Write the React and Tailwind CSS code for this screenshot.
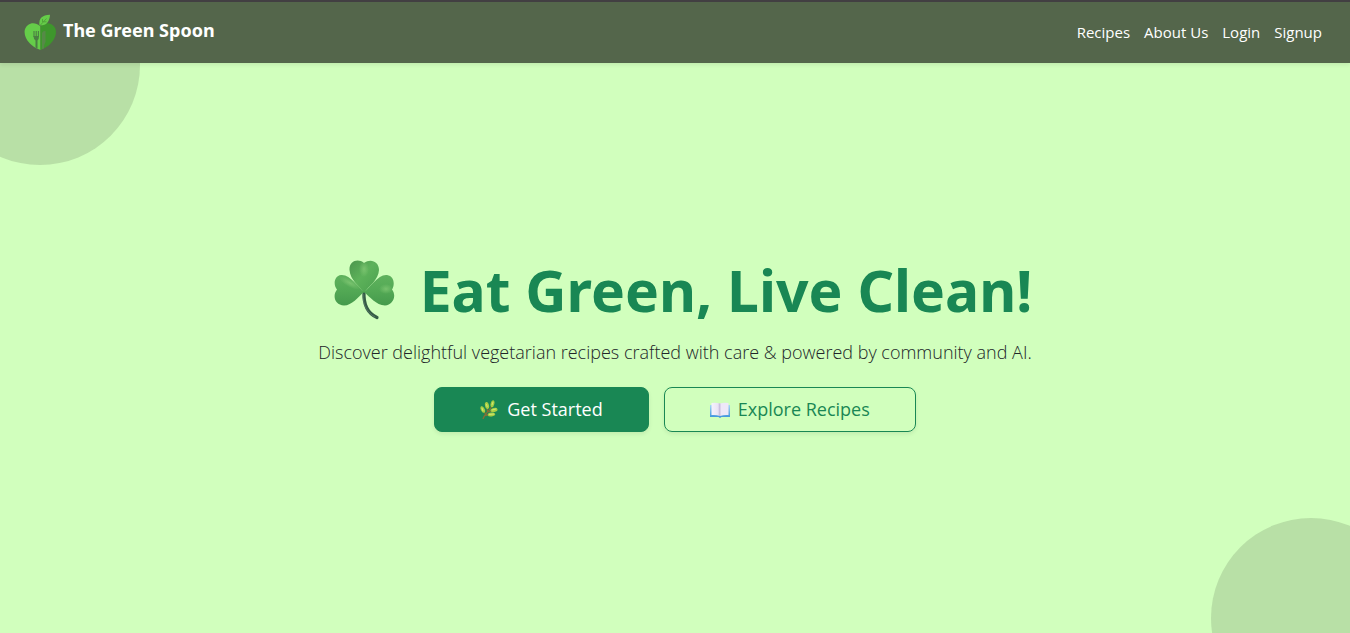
const navLinks = ['Recipes', 'About Us', 'Login', 'Signup'];

function LogoMark() {
  return (
    <svg viewBox="0 0 34 38" className="h-[38px] w-[34px] shrink-0" aria-hidden="true">
      <path d="M16.500 12.500C12 8.500 7.500 8.500 4 11C0 14 -.3 19 2 24C5 30 10 33.500 16.500 36Z" fill="#65cd49" />
      <path d="M16.500 12.500C21 8.500 25 8.500 28.500 11C32.500 14 33 19 30.500 24C28 29.500 23 33.500 16.500 36Z" fill="#3e962c" />
      <path d="M15.500 11.500C14.500 4.500 18 1 26 .8C25.500 8 22 12 15.500 11.500Z" fill="#65cd49" />
      <path d="M16 11.500L22.500 4.500M18.500 8V5M19.500 7.800H22.500" stroke="#438b31" strokeWidth=".6" fill="none" />
      <path d="M10 17V23M12.200 17V23M14.400 17V23" stroke="#4a7f42" strokeWidth="1.100" fill="none" />
      <path d="M9.500 22H15Q15 25.500 13.500 26.500V34.500L11.500 33.500V26.500Q9.500 25 9.500 22Z" fill="#4a7f42" />
      <path d="M18 35V19Q19 16.500 21.500 17V28Q20 30 20 34.500Z" fill="#568a47" />
    </svg>
  );
}

function Shamrock() {
  return (
    <svg viewBox="0 0 62 60" className="h-[60px] w-[62px] shrink-0" aria-hidden="true">
      <defs>
        <linearGradient id="leafTop" x1="0" y1="0" x2="1" y2="1">
          <stop stopColor="#4b954d" />
          <stop offset=".45" stopColor="#5db25a" />
          <stop offset="1" stopColor="#4a9f4e" />
        </linearGradient>
        <linearGradient id="leafSide" x1="0" y1="0" x2="0" y2="1">
          <stop stopColor="#5fb25d" />
          <stop offset=".5" stopColor="#53a955" />
          <stop offset="1" stopColor="#459a4c" />
        </linearGradient>
        <radialGradient id="leafShine">
          <stop stopColor="#8fd17d" stopOpacity=".6" />
          <stop offset="1" stopColor="#8fd17d" stopOpacity="0" />
        </radialGradient>
      </defs>
      <path d="M30 32C29.500 43 33 53 43 57.500" stroke="#355c45" strokeWidth="3.200" strokeLinecap="round" fill="none" />
      <path d="M29 34C28.500 44 33 53 41 57" stroke="#628374" strokeWidth=".7" fill="none" />
      <path d="M30 33C26 27 16 20 15.500 10C15 1 24-2 30 3C37-2 45 2 45 10C44.500 20 35 26 30 33Z" fill="url(#leafTop)" />
      <path d="M30 32C24 27 16 14 7 15C0 16-1 25 3 29.500C-2 36 1 45 10 45.500C18 45.500 24 37 30 32Z" fill="url(#leafSide)" />
      <path d="M30 32C37 27 44 14 53 15C60.500 16 61 25 58 29.500C63 36 59 45 51 45.500C42 45 36 37 30 32Z" fill="url(#leafSide)" />
      <ellipse cx="30" cy="9" rx="5" ry="8" fill="url(#leafShine)" />
      <ellipse cx="16" cy="23" rx="12" ry="4" fill="url(#leafShine)" transform="rotate(28 16 23)" />
      <ellipse cx="52" cy="29" rx="7" ry="5" fill="url(#leafShine)" />
    </svg>
  );
}

function Herb() {
  return (
    <svg viewBox="0 0 18 19" className="h-[19px] w-[18px] shrink-0" aria-hidden="true">
      <path d="M3 19C4 14 9 12 12 6M5.500 14L3 10M7.500 12L7 6M8 12L13 10.500M5 15.500L10 14.500" stroke="#866e37" strokeWidth="1.300" fill="none" />
      <g fill="#a8cf43">
        <ellipse cx="2.800" cy="9.500" rx="1.900" ry="3.500" transform="rotate(-25 2.800 9.500)" />
        <ellipse cx="7" cy="5.500" rx="2" ry="3.600" transform="rotate(-12 7 5.500)" />
        <ellipse cx="12.500" cy="3.800" rx="1.800" ry="3.600" transform="rotate(14 12.500 3.800)" />
        <ellipse cx="14" cy="10" rx="3.600" ry="2" transform="rotate(-14 14 10)" />
        <ellipse cx="11.500" cy="14.500" rx="3.700" ry="2" transform="rotate(-6 11.500 14.500)" />
      </g>
      <path d="M2 8L3 11M6.500 4L7.200 7M13 2L12 5M12 10L16 9M9 14.500L14 14" stroke="#d0e575" strokeWidth="1" />
    </svg>
  );
}

function OpenBook() {
  return (
    <svg viewBox="0 0 20 16" className="h-4 w-5 shrink-0" aria-hidden="true">
      <defs>
        <linearGradient id="bookCover" x1="0" y1="0" x2="0" y2="1">
          <stop stopColor="#a4d9ef" />
          <stop offset="1" stopColor="#3c91dc" />
        </linearGradient>
        <linearGradient id="bookPage">
          <stop stopColor="#f6f2fc" />
          <stop offset=".7" stopColor="#ebe5f6" />
          <stop offset="1" stopColor="#cfc4e2" />
        </linearGradient>
      </defs>
      <path d="M0 3H20V15H11.500L10 16L8.500 15H0Z" fill="url(#bookCover)" />
      <path d="M1.500 1Q6 .2 10 1.500V14Q6 12.500 1.500 13Z" fill="url(#bookPage)" />
      <path d="M10 1.500Q14 .2 18.500 1V13Q14 12.500 10 14Z" fill="#eee8f8" />
      <path d="M10 1.500V14" stroke="#b9b0d1" strokeWidth=".7" />
    </svg>
  );
}

export default function App() {
  return (
    <div className="flex min-h-screen flex-col bg-[#d1ffbd] font-['Open_Sans','Noto_Sans',sans-serif]">
      <header className="relative z-10 flex items-center justify-between border-t-2 border-[#423f42] bg-[#54664b] pt-3 pr-7 pb-[11px] pl-6 shadow-[0_2px_4px_rgba(0,0,0,0.08)]">
        <a href="#home" className="flex items-start gap-[5px] text-white">
          <LogoMark />
          <span className="font-['Noto_Sans','Open_Sans',sans-serif] text-lg leading-8 font-bold">The Green Spoon</span>
        </a>
        <nav aria-label="Main" className="pb-0.5">
          <ul className="flex gap-[14px] text-[15px] leading-6 text-white">
            {navLinks.map((label) => (
              <li key={label}>
                <a href={'#' + label.toLowerCase().replace(' ', '-')}>{label}</a>
              </li>
            ))}
          </ul>
        </nav>
      </header>

      <main className="relative flex flex-1 flex-col items-center justify-center overflow-hidden px-6 pb-1 text-center">
        <div className="absolute -top-[98px] -left-[60px] size-[200px] rounded-full bg-[#54664b]/20" />
        <div className="absolute -right-[61px] -bottom-[85px] size-[200px] rounded-full bg-[#54664b]/20" />

        <h1 className="relative flex items-center gap-6 pl-4 font-['Noto_Sans','Open_Sans',sans-serif] text-[57px] leading-[52px] font-bold text-[#198754]">
          <Shamrock />
          <span>Eat Green, Live Clean!</span>
        </h1>
        <p className="relative mt-[18px] text-lg leading-7 font-light text-[#212529]">
          Discover delightful vegetarian recipes crafted with care &amp; powered by community and AI.
        </p>
        <div className="relative mt-[21px] flex flex-wrap justify-center gap-[15px] text-lg leading-[27px]">
          <a href="#signup" className="flex items-center gap-[9px] rounded-lg border border-[#198754] bg-[#198754] px-[45px] py-2 text-white shadow-[0_2px_4px_rgba(0,0,0,0.08)]">
            <Herb />
            Get Started
          </a>
          <a href="#recipes" className="flex items-center gap-2 rounded-lg border border-[#198754] px-[45px] py-2 text-[#198754] shadow-[0_2px_4px_rgba(0,0,0,0.08)]">
            <OpenBook />
            Explore Recipes
          </a>
        </div>
      </main>
    </div>
  );
}
